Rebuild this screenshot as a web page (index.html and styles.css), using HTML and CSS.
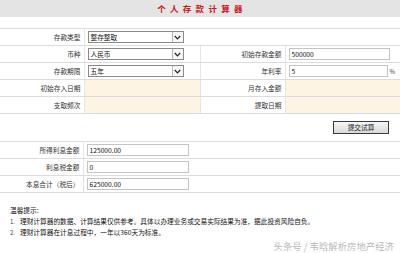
FILE: index.html
```html
<!DOCTYPE html>
<html lang="zh">
<head>
<meta charset="utf-8">
<link rel="stylesheet" href="styles.css">
</head>
<body>
<div class="title">个人存款计算器</div>
<table class="form">
  <colgroup><col class="c1"><col class="c2"><col class="c3"><col class="c4"></colgroup>
  <tr>
    <th>存款类型</th>
    <td colspan="3"><div class="select"><span class="val">整存整取</span><span class="arrow"><svg width="7" height="5" viewBox="0 0 7 5"><path d="M0.8 1 L3.5 3.8 L6.2 1" fill="none" stroke="#222" stroke-width="1.2"/></svg></span></div></td>
  </tr>
  <tr>
    <th>币种</th>
    <td><div class="select"><span class="val">人民币</span><span class="arrow"><svg width="7" height="5" viewBox="0 0 7 5"><path d="M0.8 1 L3.5 3.8 L6.2 1" fill="none" stroke="#222" stroke-width="1.2"/></svg></span></div></td>
    <th>初始存款金额</th>
    <td><div class="input wide">500000</div></td>
  </tr>
  <tr>
    <th>存款期限</th>
    <td><div class="select"><span class="val">五年</span><span class="arrow"><svg width="7" height="5" viewBox="0 0 7 5"><path d="M0.8 1 L3.5 3.8 L6.2 1" fill="none" stroke="#222" stroke-width="1.2"/></svg></span></div></td>
    <th>年利率</th>
    <td><div class="rate"><div class="input narrow">5</div><span class="pct">%</span></div></td>
  </tr>
  <tr>
    <th>初始存入日期</th>
    <td class="peach"></td>
    <th>月存入金额</th>
    <td class="peach"></td>
  </tr>
  <tr>
    <th>支取频次</th>
    <td class="peach"></td>
    <th>提取日期</th>
    <td class="peach"></td>
  </tr>
</table>
<div class="actions"><button class="btn">提交试算</button></div>
<table class="result">
  <colgroup><col class="r1"><col class="r2"></colgroup>
  <tr><th>所得利息金额</th><td><div class="input res">125000.00</div></td></tr>
  <tr><th>利息税金额</th><td><div class="input res">0</div></td></tr>
  <tr><th>本息合计（税后）</th><td><div class="input res">625000.00</div></td></tr>
</table>
<div class="notes">
  <div class="nt">温馨提示:</div>
  <div class="nl"><span class="num">1.</span>理财计算器的数据、计算结果仅供参考。具体以办理业务或交易实际结果为准，据此投资风险自负。</div>
  <div class="nl"><span class="num">2.</span>理财计算器在计息过程中，一年以360天为标准。</div>
</div>
<div class="wm">头条号 / 韦晗解析房地产经济</div>
</body>
</html>
```
FILE: styles.css
```css
html, body {
  margin: 0;
  padding: 0;
  background: #fff;
  width: 400px;
  height: 253px;
  overflow: hidden;
  font-family: "Noto Sans CJK SC", "Liberation Sans", sans-serif;
  font-size: 6.7px;
  color: #222;
}
.title {
  height: 17px;
  background: #e4e4e4;
  color: #c8161d;
  font-weight: bold;
  font-size: 8.5px;
  letter-spacing: 4.3px;
  text-align: center;
  line-height: 17px;
  padding-left: 4px;
}
table {
  border-collapse: collapse;
  table-layout: fixed;
  width: 400px;
}
.form {
  margin-top: 11px;
}
.c1 { width: 84px; }
.c2 { width: 116px; }
.c3 { width: 85px; }
.c4 { width: 115px; }
.r1 { width: 83px; }
.r2 { width: 317px; }
th, td {
  height: 16px;
  padding: 0;
  border-top: 1px solid #dcdcdc;
  border-bottom: 1px solid #dcdcdc;
  vertical-align: middle;
}
th {
  font-weight: normal;
  text-align: right;
  padding-right: 3px;
  border-right: 1px solid #e6e6e6;
  color: #333;
}
td {
  padding-left: 3px;
  border-right: 1px solid #e6e6e6;
}
td:last-child { border-right: none; }
.peach { background: #fdf4e4; }
.select {
  display: flex;
  align-items: stretch;
  width: 96px;
  height: 12px;
  border: 1px solid #8a8a8a;
  box-sizing: border-box;
  background: #fff;
}
.select .val {
  flex: 1;
  padding-left: 2px;
  line-height: 10px;
  color: #111;
}
.select .arrow {
  width: 10px;
  border-left: 1px solid #b8b8b8;
  display: flex;
  align-items: center;
  justify-content: center;
  background: #f7f7f7;
}
.input {
  height: 12px;
  border: 1px solid #c4c4c4;
  box-sizing: border-box;
  padding-left: 2px;
  line-height: 10px;
  color: #111;
  background: #fff;
}
.wide { width: 101px; }
.rate { display: flex; align-items: center; }
.narrow { width: 99px; }
.pct { margin-left: 2px; font-size: 6px; color: #333; }
.res { width: 102px; }
.actions {
  height: 27px;
  display: flex;
  align-items: center;
  justify-content: flex-end;
  padding-right: 11px;
}
.btn {
  width: 56px;
  height: 13px;
  padding: 0;
  font-family: inherit;
  font-size: 6.7px;
  color: #222;
  border: 1px solid #3a3a3a;
  background: linear-gradient(#f6f6f6, #d9d9d9);
  line-height: 11px;
}
.result th, .result td { height: 16px; }
.notes {
  padding-left: 10px;
  margin-top: 12px;
  font-size: 6.7px;
  color: #111;
}
.nt { line-height: 11px; }
.nl { line-height: 11px; }
.num { display: inline-block; width: 10px; color: #444; font-size: 6px; }
.wm {
  text-align: right;
  padding-right: 6px;
  margin-top: 2px;
  font-size: 9.4px;
  color: #b9b9b9;
  line-height: 12px;
}
```
